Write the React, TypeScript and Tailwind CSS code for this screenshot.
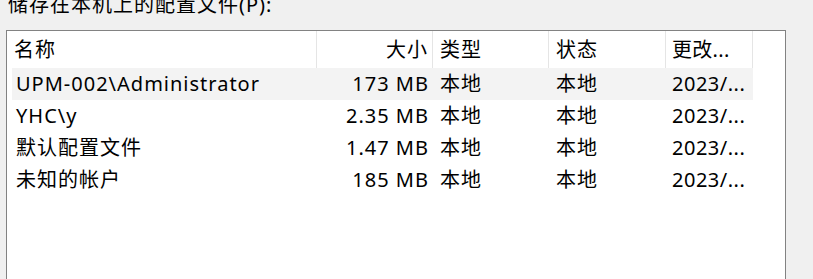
const rows = [
    {name: "UPM-002\\Administrator", size: "173 MB", type: "本地", status: "本地", date: "2023/...", hot: true},
    {name: "YHC\\y", size: "2.35 MB", type: "本地", status: "本地", date: "2023/..."},
    {name: "默认配置文件", size: "1.47 MB", type: "本地", status: "本地", date: "2023/..."},
    {name: "未知的帐户", size: "185 MB", type: "本地", status: "本地", date: "2023/..."},
];

const cols = "grid grid-cols-[305px_116px_116px_117px_87px]";

export default function App() {
    return (
        <div
            className="h-[279px] w-[813px] overflow-hidden bg-[#f0f0f0] text-[20px] tracking-[1px] text-black"
            style={{fontFamily: '"Noto Sans", "Noto Sans CJK SC", sans-serif'}}
        >
            <div className="-mt-[5px] h-[20px] whitespace-nowrap pl-[8px] leading-[20px]">储存在本机上的配置文件(P):</div>
            <div className="ml-[6px] mt-[15px] h-[260px] w-[780px] border border-[#828282] bg-white pl-[5px]">
                <div className={`${cols} h-[37px] items-center`}>
                    <div className="flex h-full items-center border-r border-[#e5e5e5] pl-[2px]">名称</div>
                    <div className="flex h-full items-center justify-end border-r border-[#e5e5e5] pr-[4px]">大小</div>
                    <div className="flex h-full items-center border-r border-[#e5e5e5] pl-[7px]">类型</div>
                    <div className="flex h-full items-center border-r border-[#e5e5e5] pl-[7px]">状态</div>
                    <div className="flex h-full items-center border-r border-[#e5e5e5] pl-[6px] tracking-[0.3px]">更改...</div>
                </div>
                {rows.map((r) => (
                    <div
                        key={r.name}
                        className={`${cols} h-[32px] w-[741px] items-center ${r.hot ? "bg-[#f3f3f3]" : ""}`}
                    >
                        <div className="whitespace-nowrap pl-[4px]">{r.name}</div>
                        <div className="whitespace-nowrap pr-[4px] text-right">{r.size}</div>
                        <div className="pl-[7px]">{r.type}</div>
                        <div className="pl-[7px]">{r.status}</div>
                        <div className="whitespace-nowrap pl-[6px] tracking-[0.5px]">{r.date}</div>
                    </div>
                ))}
            </div>
        </div>
    );
}
